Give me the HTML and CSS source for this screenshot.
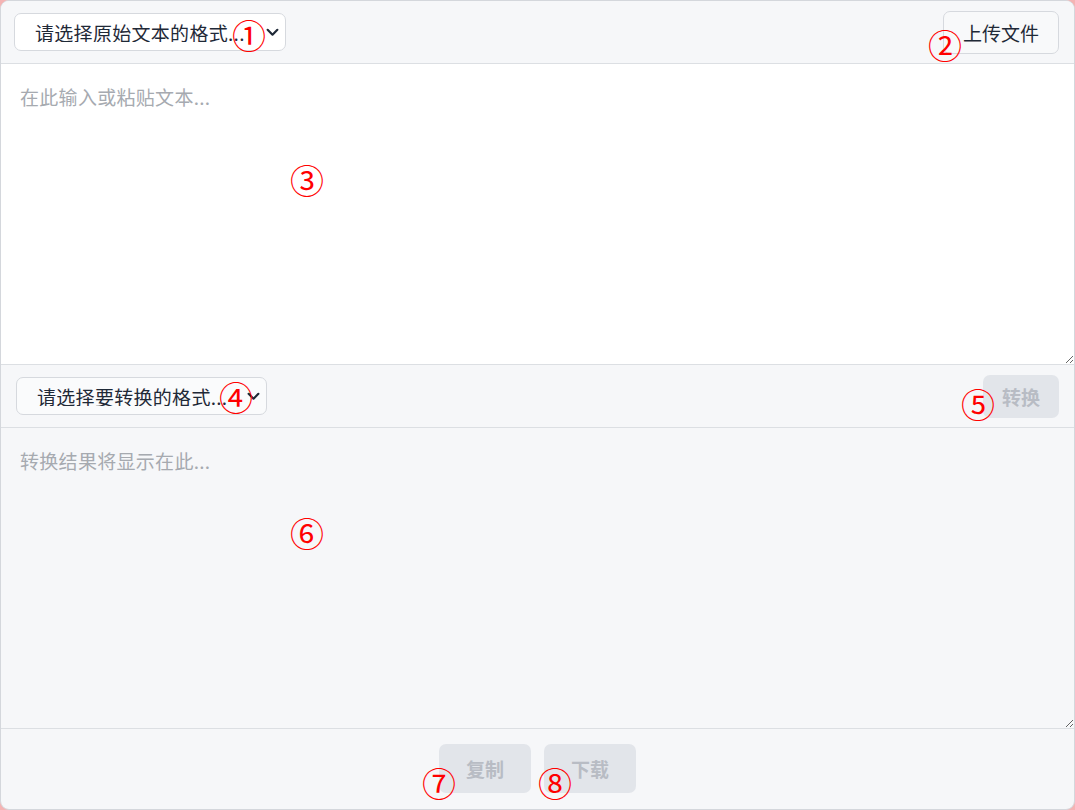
FILE: index.html
```html
<!DOCTYPE html>
<html lang="zh-CN">
<head>
<meta charset="utf-8">
<title>文本格式转换</title>
<link rel="stylesheet" href="styles.css">
</head>
<body>
<div class="converter">
  <div class="toolbar toolbar-source">
    <div class="picker picker-source">
      <span class="picker-label">请选择原始文本的格式...</span>
      <svg class="chevron" viewBox="0 0 12 8" width="12" height="8"><path d="M1.5 1.5 L6 6 L10.5 1.5" fill="none" stroke="#1f2937" stroke-width="2" stroke-linecap="round" stroke-linejoin="round"/></svg>
    </div>
    <button class="btn btn-outline">上传文件</button>
  </div>
  <textarea class="pane pane-input" placeholder="在此输入或粘贴文本..."></textarea>
  <div class="toolbar toolbar-target">
    <div class="picker picker-target">
      <span class="picker-label">请选择要转换的格式...</span>
      <svg class="chevron" viewBox="0 0 12 8" width="12" height="8"><path d="M1.5 1.5 L6 6 L10.5 1.5" fill="none" stroke="#1f2937" stroke-width="2" stroke-linecap="round" stroke-linejoin="round"/></svg>
    </div>
    <button class="btn btn-muted btn-convert" disabled>转换</button>
  </div>
  <textarea class="pane pane-output" placeholder="转换结果将显示在此..." readonly></textarea>
  <div class="actions">
    <button class="btn btn-muted btn-action" disabled>复制</button>
    <button class="btn btn-muted btn-action" disabled>下载</button>
  </div>

  <span class="marker" style="left:248px;top:36px">①</span>
  <span class="marker" style="left:944px;top:46px">②</span>
  <span class="marker" style="left:306px;top:181px">③</span>
  <span class="marker" style="left:235px;top:398px">④</span>
  <span class="marker" style="left:977px;top:405px">⑤</span>
  <span class="marker" style="left:306px;top:534px">⑥</span>
  <span class="marker" style="left:438px;top:784px">⑦</span>
  <span class="marker" style="left:554px;top:784px">⑧</span>
</div>
</body>
</html>
```

FILE: styles.css
```css
* { box-sizing: border-box; }

html, body {
  margin: 0;
  padding: 0;
  background: #f4b4b4;
}

body {
  font-family: "Noto Sans CJK SC", "Noto Sans", sans-serif;
  color: #1f2937;
}

.converter {
  position: relative;
  width: 1075px;
  height: 810px;
  border: 1px solid #d4d7dc;
  border-radius: 9px;
  overflow: hidden;
  background: #f6f7f9;
  display: flex;
  flex-direction: column;
}

.toolbar {
  height: 63px;
  flex: none;
  display: flex;
  align-items: center;
  justify-content: space-between;
  background: #f6f7f9;
  border-bottom: 1px solid #dcdfe3;
}

.toolbar-source { padding: 0 15px 0 13px; }
.toolbar-target { padding: 0 15px 0 15px; }

.picker {
  position: relative;
  height: 38px;
  border: 1px solid #d6d9de;
  border-radius: 7px;
  display: flex;
  align-items: center;
  overflow: hidden;
  font-size: 19px;
  line-height: 1;
}

.picker-source { width: 272px; background: #ffffff; padding-left: 20px; }
.picker-target { width: 251px; background: #fafbfc; padding-left: 20px; }

.picker-label {
  white-space: nowrap;
  overflow: hidden;
  flex: 1;
  color: #1f2937;
  letter-spacing: 0.3px;
}

.chevron {
  flex: none;
  width: 13px;
  height: 9px;
  margin: 0 6px 0 0;
}

.btn {
  font-family: inherit;
  font-size: 19px;
  line-height: 1;
  border-radius: 7px;
  cursor: pointer;
}

.btn-outline {
  height: 43px;
  width: 116px;
  border: 1px solid #d6d9de;
  background: #f8f9fa;
  color: #1f2937;
}

.btn-muted {
  border: none;
  background: #e2e5ea;
  color: #b8bcc4;
  font-weight: 700;
  cursor: default;
}

.btn-convert {
  height: 43px;
  width: 76px;
}

.pane {
  display: block;
  width: 100%;
  height: 301px;
  flex: none;
  margin: 0;
  border: none;
  border-bottom: 1px solid #dcdfe3;
  padding: 19px 19px;
  font-family: inherit;
  font-size: 19px;
  line-height: 1.5;
  color: #1f2937;
  outline: none;
  resize: vertical;
  letter-spacing: 0.3px;
}

.pane::placeholder { color: #a6aab0; }

.pane-input { background: #ffffff; }
.pane-output { background: #f6f7f9; }

.actions {
  flex: 1;
  display: flex;
  justify-content: center;
  align-items: center;
  gap: 13px;
  padding-bottom: 2px;
}

.btn-action {
  width: 92px;
  height: 49px;
}

.marker {
  position: absolute;
  transform: translate(-50%, -56%);
  font-family: "Noto Sans CJK SC", sans-serif;
  font-size: 34px;
  line-height: 1;
  color: #ff0000;
  pointer-events: none;
}
```
